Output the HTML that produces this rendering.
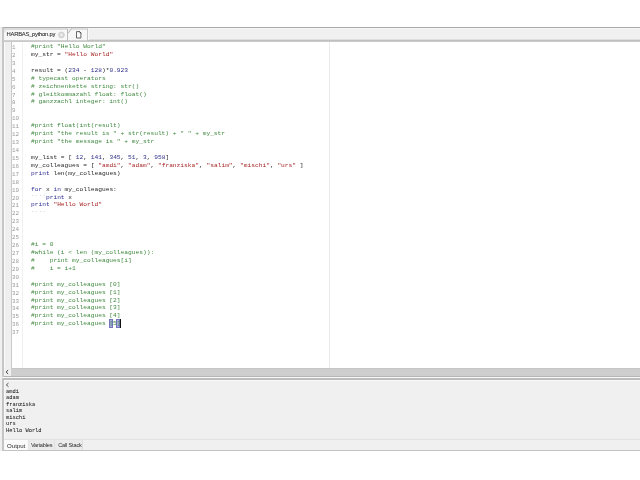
<!DOCTYPE html>
<html><head><meta charset="utf-8">
<style>
*{margin:0;padding:0;box-sizing:border-box}
html,body{width:640px;height:480px;overflow:hidden;background:#fff;position:relative}
div{position:absolute;will-change:transform}
.mono{font-family:"Liberation Mono",monospace}
.sans{font-family:"Liberation Sans",sans-serif}
#strip{left:0;top:27px;width:2px;height:424px;background:#f0f0f0}
#frame{left:2px;top:27px;width:638px;height:350px;border-left:2px solid #c6c6c6;border-top:1px solid #a9a9a9}
#tabbar{left:4px;top:28px;width:636px;height:14px;background:linear-gradient(#f6f6f6 0,#f6f6f6 1px,#eeeeee 1px,#eeeeee 10px,#d6d6d6 11px,#c2c2c2 12px,#b8b8b8 13px,#c8c8c8 14px)}
#tab1{left:4px;top:29px;width:63px;height:12px}
#tab2{left:68px;top:29px;width:20px;height:12px;background:#f4f4f4;border-right:1px solid #c4c4c4}
#tab1 span{position:absolute;left:2.6px;top:1.8px;font-size:5.85px;color:#262626;white-space:nowrap;letter-spacing:-0.26px;-webkit-text-stroke:0.05px #262626}
#editor{left:4px;top:42px;width:636px;height:326px;background:#fff}
#gutter{left:4px;top:42px;width:7px;height:326px;background:#efefef;border-left:1px solid #fafafa}
#gline{left:11px;top:42px;width:1px;height:326px;background:#c9c9c9}
#nline{left:22px;top:42px;width:1px;height:326px;background:#f1f1f1}
#margin{left:329px;top:42px;width:1px;height:326px;background:#ebebeb}
#nums{left:12.3px;top:43.6px;font-size:5.9px;line-height:7.92px;color:#9a9a9a;white-space:pre}
#code{left:31.3px;top:42.8px;font-size:6.22px;line-height:7.92px;color:#262626;white-space:pre;will-change:transform}
.c{color:#3f893f}
.s{color:#a82424}
.k{color:#2c2c96}
.n{color:#30308a}
.ws{color:#cfcfcf;position:relative;top:-1.4px;-webkit-text-stroke:0}
.br{}
#hs{left:4px;top:368px;width:636px;height:8px;background:#cecece;border-top:1px solid #c6c6c6}
#hsbtn{left:4px;top:368px;width:7.25px;height:8px;background:#f0f0f0}
#bline{left:4px;top:376px;width:636px;height:1px;background:#b5b5b5}
#wline{left:2px;top:377px;width:638px;height:1px;background:#f8f8f8}
#out{left:2px;top:378px;width:638px;height:73px;border-left:2px solid #c4c4c4;border-top:2px solid #bcbcbc;border-bottom:1px solid #c2c2c2;background:#f0f0f0;box-shadow:inset 1px 1px 0 #f8f8f8}
#outtext{left:5.8px;top:381.6px;font-size:5.4px;line-height:6.5px;color:#222;white-space:pre;-webkit-text-stroke:0.04px #222}
#btabs{left:4px;top:439px;width:636px;height:11px;background:#f0f0f0;border-top:1px solid #e2e2e2}
.bt{top:440px;height:10px;font-size:6.1px;line-height:11px;color:#2a2a2a;white-space:nowrap}
</style></head><body>
<div id="strip"></div>
<div id="frame"></div>
<svg style="position:absolute;left:0;top:0" width="640" height="44" shape-rendering="crispEdges">
<rect x="4" y="28" width="636" height="1" fill="#f6f6f6"/>
<rect x="4" y="29" width="636" height="10" fill="#f0f0f0"/>
<rect x="4" y="39" width="636" height="1" fill="#dedede"/>
<rect x="4" y="40" width="636" height="1" fill="#c0c0c0"/>
<rect x="4" y="41" width="636" height="1" fill="#c9c9c9"/>
<!-- tab1 -->
<rect x="4" y="28" width="64" height="2" fill="#dcdcdc"/>
<rect x="4" y="30" width="63" height="10" fill="#f8f8f8"/>
<rect x="4" y="40" width="63" height="1" fill="#d0d0d0"/>
<rect x="67" y="29" width="1" height="12" fill="#bababa"/>
<!-- tab2 -->
<rect x="68" y="28" width="20" height="2" fill="#dedede"/>
<rect x="68" y="30" width="19" height="10" fill="#f7f7f7"/>
<rect x="68" y="40" width="19" height="1" fill="#d0d0d0"/>
<rect x="87" y="29" width="1" height="11" fill="#c6c6c6"/>
<rect x="88" y="29" width="1" height="11" fill="#f8f8f8"/>
</svg>
<svg style="position:absolute;left:0;top:0" width="640" height="44">
<path d="M4.2 32.5 L6.5 28.6" stroke="#cfcfcf" stroke-width="0.8" fill="none"/>
<path d="M68 28 L71.8 28 L68 33 Z" fill="#ececec"/>
<path d="M68.1 33.3 L71.8 28.3" stroke="#b8b8b8" stroke-width="1" fill="none"/>
<circle cx="61.5" cy="34.9" r="2.9" fill="#d6d6d6" stroke="#c6c6c6" stroke-width="0.6"/>
<path d="M60.4 33.6 L62.6 36.2 M62.6 33.6 L60.4 36.2" stroke="#fbfbfb" stroke-width="1"/>
<path d="M76.5 31.6 H79.5 L80.9 33.1 V38 H76.5 Z" fill="#fcfcfc" stroke="#2a2a2a" stroke-width="0.7" stroke-linejoin="miter"/>
<path d="M79.4 31.5 L81.1 33.3" stroke="#1a1a1a" stroke-width="0.9"/>
<path d="M79.4 31.8 V33.2 H80.8" fill="none" stroke="#b0b0b0" stroke-width="0.4"/>
</svg>
<div id="tab1"><span class="sans">HARBAS_python.py</span></div>
<div id="editor"></div>
<div id="gutter"></div>
<div id="gline"></div>
<div id="nline"></div>
<div id="margin"></div>
<div id="nums" class="mono">1
2
3
4
5
6
7
8
9
10
11
12
13
14
15
16
17
18
19
20
21
22
23
24
25
26
27
28
29
30
31
32
33
34
35
36
37</div>
<div style="left:108.9px;top:319.2px;width:4.1px;height:8.5px;background:#adade6;border:0.6px solid #7474bb"></div>
<div style="left:116px;top:319.2px;width:4.1px;height:8.5px;background:#adade6;border:0.6px solid #7474bb"></div>
<div style="left:120px;top:319.2px;width:1px;height:8.5px;background:#111"></div>
<div id="code" class="mono"><span class="c">#print "Hello World"</span>
my_str = <span class="s">"Hello World"</span>

result = (<span class="n">234</span> - <span class="n">128</span>)*<span class="n">0.923</span>
<span class="c"># typecast operators</span>
<span class="c"># zeichnenkette string: str()</span>
<span class="c"># gleitkommazahl float: float()</span>
<span class="c"># ganzzachl integer: int()</span>


<span class="c">#print float(int(result)</span>
<span class="c">#print "the result is " + str(result) + " " + my_str</span>
<span class="c">#print "the message is " + my_str</span>

my_list = [ <span class="n">12</span>, <span class="n">141</span>, <span class="n">345</span>, <span class="n">51</span>, <span class="n">3</span>, <span class="n">958</span>]
my_colleagues = [ <span class="s">"amdi"</span>, <span class="s">"adam"</span>, <span class="s">"franziska"</span>, <span class="s">"salim"</span>, <span class="s">"mischi"</span>, <span class="s">"urs"</span> ]
<span class="k">print</span> len(my_colleagues)

<span class="k">for</span> x <span class="k">in</span> my_colleagues:
<span class="ws">····</span><span class="k">print</span> x
<span class="k">print</span> <span class="s">"Hello World"</span>
<span class="ws">····</span>



<span class="c">#i = 0</span>
<span class="c">#while (i &lt; len (my_colleagues)):</span>
<span class="c">#    print my_colleagues[i]</span>
<span class="c">#    i = i+1</span>

<span class="c">#print my_colleagues [0]</span>
<span class="c">#print my_colleagues [1]</span>
<span class="c">#print my_colleagues [2]</span>
<span class="c">#print my_colleagues [3]</span>
<span class="c">#print my_colleagues [4]</span>
<span class="c">#print my_colleagues <span class="br">[</span>5<span class="br">]</span></span>
</div>
<div id="hs"></div>
<div id="hsbtn"></div>
<svg style="position:absolute;left:0;top:360px" width="20" height="20"><path d="M7.9 10.3 L6.1 12 L7.9 13.7" stroke="#3a3a3a" stroke-width="1.0" fill="none" stroke-linecap="round" stroke-linejoin="round"/></svg>
<div id="bline"></div>
<div id="wline"></div>
<div id="out"></div>
<svg style="position:absolute;left:0;top:378px" width="20" height="12"><path d="M8.2 5.3 L6.4 6.9 L8.2 8.5" stroke="#444" stroke-width="0.9" fill="none" stroke-linecap="round" stroke-linejoin="round"/></svg>
<div id="outtext" class="mono">
amdi
adam
franziska
salim
mischi
urs
Hello World</div>
<div id="btabs"></div>
<div class="bt sans" style="left:4px;width:24px;background:#fbfbfb;padding-left:3px;font-size:6.1px">Output</div>
<div class="bt sans" style="left:28px;width:26px;background:#ebebeb;padding-left:1.9px;letter-spacing:-0.15px;font-size:5.6px;border-left:1px solid #e2e2e2">Variables</div>
<div class="bt sans" style="left:54px;width:28.5px;background:#ebebeb;padding-left:3.2px;letter-spacing:-0.17px;font-size:5.6px;border-left:1px solid #e2e2e2;border-right:1px solid #e0e0e0">Call Stack</div>
</body></html>
